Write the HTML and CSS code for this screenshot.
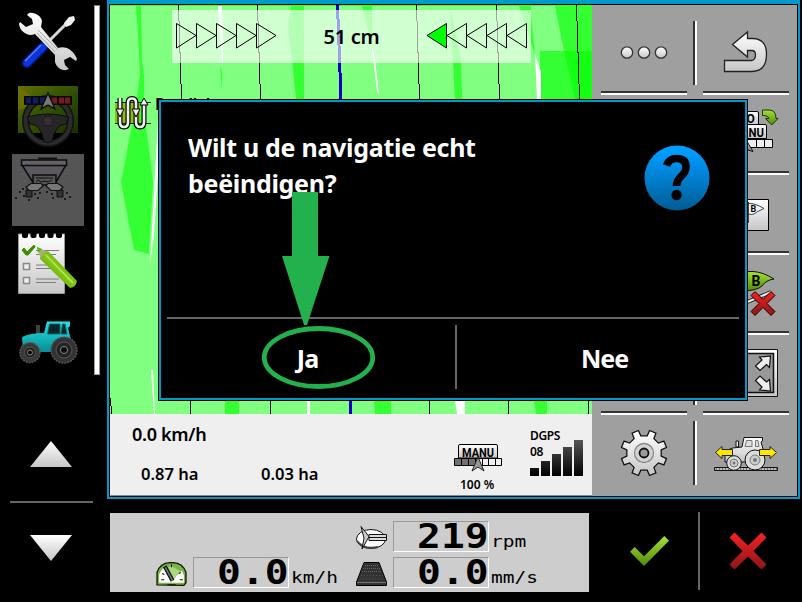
FILE: index.html
```html
<!DOCTYPE html>
<html lang="nl">
<head>
<meta charset="utf-8">
<title>Navigatie</title>
<link rel="stylesheet" href="styles.css">
</head>
<body>
<svg class="defs" width="0" height="0" aria-hidden="true">
  <defs>
    <linearGradient id="silver" x1="0" y1="0" x2="0" y2="1"><stop offset="0" stop-color="#fff"/><stop offset="1" stop-color="#c6c6c6"/></linearGradient>
    <linearGradient id="lime" x1="0" y1="0" x2="0" y2="1"><stop offset="0" stop-color="#a8e038"/><stop offset="1" stop-color="#4f8a08"/></linearGradient>
    <linearGradient id="red" x1="0" y1="0" x2="0" y2="1"><stop offset="0" stop-color="#f52222"/><stop offset="1" stop-color="#8c1518"/></linearGradient>
    <linearGradient id="blue" x1="0" y1="0" x2="0" y2="1"><stop offset="0.1" stop-color="#009cff"/><stop offset="1" stop-color="#005c94"/></linearGradient>
    <linearGradient id="teal" x1="0" y1="0" x2="0" y2="1"><stop offset="0" stop-color="#22e4e8"/><stop offset="1" stop-color="#068d94"/></linearGradient>
    <linearGradient id="dark" x1="0" y1="0" x2="0" y2="1"><stop offset="0" stop-color="#555"/><stop offset="1" stop-color="#000"/></linearGradient>
    <linearGradient id="olive" x1="0" y1="0" x2="1" y2="1"><stop offset="0" stop-color="#6b6f00"/><stop offset="0.35" stop-color="#3c5a04"/><stop offset="1" stop-color="#163000"/></linearGradient>
    <linearGradient id="pencil" x1="1" y1="0" x2="0" y2="1"><stop offset="0" stop-color="#4f8a0c"/><stop offset="0.5" stop-color="#86c81a"/><stop offset="1" stop-color="#2f6a00"/></linearGradient>
  </defs>
</svg>
<div class="terminal">
  <nav class="sidebar">
    <div class="apps">
      <div class="app">
        <svg viewBox="12 6 72 72">
          <path d="M27 63L43 47" stroke="#001a8c" stroke-width="10" stroke-linecap="round"/>
          <path d="M27 63L43 47" stroke="#0a35d8" stroke-width="7" stroke-linecap="round"/>
          <path d="M25 61L41 45" stroke="#5a80ff" stroke-width="1.500"/>
          <path d="M48 42L67 23" stroke="#d8d8d8" stroke-width="3"/>
          <path d="M64 23L69 17L74 16L75 20L71 25L66 27Z" fill="#eee"/>
          <path d="M29 13C35 12 41 16 42 21L41 27L58 48C65 45 74 50 77 59L76 61L70 57L64 60L65 65L69 69C64 72 57 69 55 62L55 55L35 34C28 37 20 32 19 24L20 22L26 27L33 24L32 19L27 15Z" fill="url(#silver)"/>
          <path d="M38 30L58 50M37 33L55 52" stroke="#aaa" fill="none"/>
        </svg>
      </div>
      <div class="app">
        <svg viewBox="12 80 72 72">
          <path d="M18 86H78V133H18Z" fill="url(#olive)"/>
          <path d="M18 86L40 103L18 110Z" fill="#747400" opacity=".7"/>
          <circle cx="48" cy="121" r="22.500" fill="none" stroke="#111" stroke-width="7"/>
          <circle cx="48" cy="121" r="22.500" fill="none" stroke="#2b2b2b" stroke-width="4"/>
          <path d="M27 117Q48 111 69 117L66 124Q55 124 52 142H44Q41 124 30 124Z" fill="#262626" stroke="#0c0c0c"/>
          <circle cx="48" cy="121" r="5" fill="#303030" stroke="#171717"/>
          <path d="M24 96H72V105H24Z" fill="#080808"/>
          <path d="M26 97.500h5v6h-5zM33 97.500h5v6h-5zM40 97.500h5v6h-5z" fill="#111b62"/>
          <path d="M52 97.500h5v6h-5zM59 97.500h5v6h-5zM65 97.500h5v6h-5z" fill="#781820"/>
          <path d="M48 93L55 109L48 105L41 109Z" fill="#777" stroke="#111" stroke-width="1.500"/>
        </svg>
      </div>
      <div class="app active">
        <svg viewBox="12 154 72 72">
          <path d="M38 158.500H57" stroke="#111" stroke-width="2"/>
          <path d="M22 165L34 184H55L66 165Z" fill="#5d5860" stroke="#0c0c0c" stroke-width="1.500"/>
          <path d="M21.500 160H66.500V165.500H21.500Z" fill="#636363" stroke="#0c0c0c" stroke-width="1.500"/>
          <path d="M33 175H56V185H33Z" fill="#555" stroke="#0c0c0c" stroke-width="1.500"/>
          <path d="M36 178H53M36 182l2-2 3 2 4-1 3 1 4-2" stroke="#111" fill="none"/>
          <path d="M26 190h6v7h-6zM57 190h6v7h-6z" fill="#333" stroke="#111"/>
          <path d="M26 187L31 183.500H41L43 186L38 190.500H29ZM63 187L58 183.500H48L46 186L51 190.500H60Z" fill="#777" stroke="#111" stroke-width="1.200"/>
          <path d="M19 191h2v2h-2zM23 195h2v2h-2zM15 197h2v2h-2zM34 193h2v2h-2zM39 192h2v2h-2zM46 191h2v2h-2zM51 193h2v2h-2zM37 197h2v2h-2zM52 197h2v2h-2zM66 192h2v2h-2zM69 196h2v2h-2zM64 198h2v2h-2zM22 188h2v2h-2zM28 199h2v2h-2z" fill="#1b1b1b"/>
        </svg>
      </div>
      <div class="app">
        <svg viewBox="12 228 72 72">
          <path d="M18.500 234H64.500V293.500H18.500Z" fill="url(#silver)" stroke="#999"/>
          <path d="M22 232h6v4a3 2 0 0 1-6 0zM30.500 232h6v4a3 2 0 0 1-6 0zM39 232h6v4a3 2 0 0 1-6 0zM47.500 232h6v4a3 2 0 0 1-6 0zM56 232h6v4a3 2 0 0 1-6 0z" fill="#000"/>
          <path d="M36 250.500H59M36 254.500H56M36 265H59M36 268.500H56M36 279H59M36 282.500H56" stroke="#7d7d7d"/>
          <path d="M23.500 263.500h6v6h-6zM23.500 277.500h6v6h-6z" fill="#eee" stroke="#888" stroke-width="1.500"/>
          <path d="M22 250L24 248L27 252L34 245L35 247L28 255H26Z" fill="#3c8c00" stroke="#3c8c00"/>
          <path d="M37 247L48 252L41 260Z" fill="#b7a77d"/>
          <path d="M37 247L42 249L38 253Z" fill="#46c018"/>
          <path d="M48 251L77 281Q76 287 70 288L40 259Q42 253 48 251Z" fill="url(#pencil)"/>
          <path d="M46 255L73 283" stroke="#b3ec4a" stroke-width="1.500"/>
        </svg>
      </div>
      <div class="app">
        <svg viewBox="12 302 72 72">
          <path d="M36 334V325H40V334Z" fill="#404040"/>
          <path d="M22 337Q30 333 44 333L47 321.500H70V326L68 328L71 340L60 352H23Z" fill="url(#teal)"/>
          <path d="M49.500 324H60V334H47.500ZM62.500 324H65L67 334H61Z" fill="#0a2426" stroke="#076b70"/>
          <circle cx="64" cy="350" r="13" fill="#333" stroke="#555" stroke-width="1.500" stroke-dasharray="2 1"/>
          <circle cx="64" cy="350" r="8" fill="#242424" stroke="#555"/>
          <circle cx="64" cy="350" r="3.500" fill="#070707" stroke="#888"/>
          <circle cx="30" cy="352.500" r="10" fill="#383838" stroke="#5a5a5a" stroke-width="1.500" stroke-dasharray="2 1"/>
          <circle cx="30" cy="352.500" r="5.500" fill="#222" stroke="#555"/>
          <circle cx="30" cy="352.500" r="2.500" fill="#000" stroke="#888"/>
        </svg>
      </div>
    </div>
    <div class="scrollbar"></div>
    <div class="pager">
      <svg class="up" viewBox="0 0 42 26"><path d="M21 0L42 26H0Z" fill="url(#silver)"/></svg>
      <div class="rule"></div>
      <svg class="down" viewBox="0 0 42 26"><path d="M0 0H42L21 26Z" fill="url(#silver)"/></svg>
    </div>
  </nav>

  <section class="window">
    <div class="screen">
      <div class="field">
        <div class="map">
          <svg class="terrain" viewBox="110 5 482 409">
            <g fill="#00ff00" fill-opacity=".6">
              <path d="M110 5H592V6H110Z"/>
              <path d="M136 6H141L142 60L144 75V110L153 182L149 254L134 250L121 182L135 110L140 75L138 33Z"/>
              <path d="M291 6H304V99H296L291 50L288 30Z"/>
              <path d="M362 6H372V45Z"/>
              <path d="M450 7L461 60L462 99H455Z"/>
              <path d="M519 6H531V16L535 55Z"/>
              <path d="M555 6H592V51H564Z"/>
              <path d="M540 51H592V99H540Z"/>
              <path d="M564 51H592V99H575Z"/>
              <path d="M225 401H239V414H225ZM374 401H391V414H375ZM534 401H547V414H536Z"/>
              <path d="M220 66L222 72V90L221 80Z"/>
            </g>
            <g fill="#fff">
              <path d="M218 6H222L223 63H222Z"/>
              <path d="M371 38L375 60L379 94L377 91L374 66Z"/>
              <path d="M535 54L541 72V99H537Z"/>
              <path d="M307 401H310V414H307ZM455 401H465V414H457Z"/>
              <path d="M158 120V175L154 235L150 265ZM151 370L153 370L155 414H154Z"/>
            </g>
            <g fill="none" stroke="#000" shape-rendering="crispEdges">
              <path d="M178.500 5L181.500 99L190.500 390V414M257.500 5L260.500 99L270.500 390V414M416.500 5L419.500 99L429.500 390V414M496.500 5L499.500 99L508.500 390V414M576.500 5L579.500 99L588.500 390V414M110.500 398L111.500 414"/>
              <path d="M337.500 5L341 99L350.500 390V414" stroke="#0000c8" stroke-width="3"/>
            </g>
          </svg>
          <div class="lightbar">
            <svg viewBox="0 0 101 26"><path d="M.5 .5L20 12.500L.5 25ZM20.500 .5L40 12.500L20.500 25ZM40.500 .5L60 12.500L40.500 25ZM60.500 .5L80 12.500L60.500 25ZM80.500 .5L100 12.500L80.500 25Z" fill="none" stroke="#000"/></svg>
            <span class="deviation">51 cm</span>
            <svg viewBox="0 0 101 26"><path d="M20.500 .5L1 12.500L20.500 25Z" fill="#0f0" stroke="#000"/><path d="M40.500 .5L21 12.500L40.500 25ZM60.500 .5L41 12.500L60.500 25ZM80.500 .5L61 12.500L80.500 25ZM100.500 .5L81 12.500L100.500 25Z" fill="none" stroke="#000"/></svg>
          </div>
          <div class="mode">
            <svg viewBox="115 96 36 34">
              <path d="M115 103H140V123H115Z" fill="#8bbf12"/>
              <path d="M115 102.500H151M115 123.500H151" stroke="#222"/>
              <path d="M120 98V122Q120 127 124 127T128 122V103Q128 98.500 132 98.500T136 103V122Q136 127 140 127T144 122V103" fill="none" stroke="#000" stroke-width="5"/>
              <path d="M120 98V122Q120 127 124 127T128 122V103Q128 98.500 132 98.500T136 103V122Q136 127 140 127T144 122V103" fill="none" stroke="#eee" stroke-width="2.600"/>
              <path d="M116 109H124L120 117ZM132 109H140L136 117ZM140 105H148L144 98Z" fill="#eee" stroke="#000"/>
            </svg>
            <span>Parallel</span>
          </div>
        </div>
        <div class="info">
          <div class="work">
            <span class="speed">0.0 km/h</span>
            <div class="areas"><span>0.87 ha</span><span>0.03 ha</span></div>
          </div>
          <div class="steering">
            <svg viewBox="454 444 48 28">
              <path d="M458.500 458V446Q458.500 444.500 460 444.500H496Q497.500 444.500 497.500 446V458Z" fill="url(#silver)" stroke="#000"/>
              <text class="badge" x="478" y="456.500" text-anchor="middle" textLength="32" lengthAdjust="spacingAndGlyphs">MANU</text>
              <path d="M454.500 458.500H501.500V465.500H454.500Z" fill="#eee" stroke="#000"/>
              <path d="M455 459H478V465H455Z" fill="#707070"/>
              <path d="M461.500 459V465M468.500 459V465M475.500 459V465M482.500 459V465M488.500 459V465M495.500 459V465" stroke="#000"/>
              <path d="M478 457L484 471L478 467L472 471Z" fill="#999" stroke="#222"/>
            </svg>
            <span>100 %</span>
          </div>
          <div class="gps">
            <div class="gpstext"><span>DGPS</span><span>08</span></div>
            <svg viewBox="530 440 53 36"><path d="M530 468h9v8h-9zM541 461h9v15h-9zM552 454h9v22h-9zM563 447h9v29h-9zM574 440h9v36h-9z" fill="url(#dark)"/></svg>
          </div>
        </div>
      </div>

      <aside class="softkeys">
        <div class="row">
          <div class="key"><svg viewBox="601 15 86 76"><g fill="url(#silver)" stroke="#333" stroke-width="1.300"><circle cx="627" cy="52.500" r="5.700"/><circle cx="644" cy="52.500" r="5.700"/><circle cx="661" cy="52.500" r="5.700"/></g></svg></div>
          <div class="split"></div>
          <div class="key"><svg viewBox="703 15 86 76"><path d="M724.500 60.500V71.500H752Q766.500 71.500 766.500 54Q766.500 38.500 752 38.500H747.500V32L732.500 44.500L747.500 57V50.500H752Q755.500 50.500 755.500 55T752 60.500Z" fill="url(#silver)" stroke="#222" stroke-width="1.300"/></svg></div>
        </div>
        <div class="row">
          <div class="key"></div>
          <div class="split"></div>
          <div class="key"><svg viewBox="703 95 86 76">
            <path d="M724 111.500H757Q758.500 111.500 758.500 113V125H724Z" fill="url(#silver)" stroke="#000"/>
            <text class="badge" x="746.500" y="122.500">O</text>
            <path d="M720 124.500H765Q766.500 124.500 766.500 126V138.500H720Z" fill="url(#silver)" stroke="#000"/>
            <text class="badge" x="748.500" y="136.500" textLength="15.500" lengthAdjust="spacingAndGlyphs">NU</text>
            <path d="M720 139.500H772.500V147.500H720ZM756.500 140V147M764.500 140V147" fill="#eee" stroke="#000"/>
            <path d="M745 138L753 151.500L748 150Z" fill="#999" stroke="#111"/>
            <path d="M762.500 110H769Q776 110 776 118.500H778L771.700 125L765.500 118.500H769Q768 115.500 762.500 115.500Z" fill="url(#lime)" stroke="#1d3500"/>
          </svg></div>
        </div>
        <div class="row">
          <div class="key"></div>
          <div class="split"></div>
          <div class="key"><svg viewBox="703 175 86 76">
            <path d="M720 199.500H768.500V230.500H720Z" fill="url(#silver)" stroke="#000"/>
            <path d="M748.500 202V223M748.500 203.500Q755 203 764 208.500Q756 212 754 214Q751 215 748.500 214Z" fill="#f5f5f5" stroke="#444"/>
            <text class="tiny" x="750.500" y="212">B</text>
          </svg></div>
        </div>
        <div class="row">
          <div class="key"></div>
          <div class="split"></div>
          <div class="key"><svg viewBox="703 255 86 76">
            <path d="M740 271.500H753Q763 272 774 279Q766 280 762 286Q757 291 740 291Z" fill="url(#lime)" stroke="#111"/>
            <text class="badge flag" x="751.500" y="286">B</text>
            <path d="M745 303L771 292" stroke="#222" stroke-width="4"/><path d="M745 303L771 292" stroke="#eee" stroke-width="2"/>
            <path d="M755 291.500L763 299.500L771 291.500L775 295.500L767 303.500L775 311.500L771 315.500L763 307.500L755 315.500L751 311.500L759 303.500L751 295.500Z" fill="url(#red)" stroke="#200"/>
          </svg></div>
        </div>
        <div class="row">
          <div class="key"></div>
          <div class="split"></div>
          <div class="key"><svg viewBox="703 335 86 76">
            <path d="M710 349.500H777.500V396.500H710Z" fill="url(#silver)" stroke="#111"/>
            <path d="M714 353.500H773.500V392.500H714Z" fill="#999" stroke="#111" stroke-width="1.500"/>
            <path d="M759.500 357L770.500 356L769.500 367.500L766.500 364.500L760 370.500L755.500 366L762 360ZM759.500 390L770.500 391L769.500 379.500L766.500 382L760 376L755.500 380.500L762 387Z" fill="#eee" stroke="#111" stroke-width="1.200"/>
          </svg></div>
        </div>
        <div class="row last">
          <div class="key"><svg viewBox="601 415 86 76">
            <g transform="translate(644 453)" stroke="#111" stroke-width="1.300">
              <path d="M17.200 3.200L22.500 5.600L19.900 11.900L14.400 9.900L9.900 14.400L11.900 19.900L5.600 22.500L3.200 17.200H-3.200L-5.600 22.500L-11.900 19.900L-9.900 14.400L-14.400 9.900L-19.900 11.900L-22.500 5.600L-17.200 3.200V-3.200L-22.500 -5.600L-19.900 -11.900L-14.400 -9.900L-9.900 -14.400L-11.900 -19.900L-5.600 -22.500L-3.200 -17.200H3.200L5.600 -22.500L11.900 -19.900L9.900 -14.400L14.400 -9.900L19.900 -11.900L22.500 -5.600L17.200 -3.200Z" fill="url(#silver)"/>
              <circle r="9.500" fill="#d4d4d4" stroke="#888"/>
              <circle r="4.500" fill="#999" stroke-width="1.800"/>
            </g>
          </svg></div>
          <div class="split"></div>
          <div class="key"><svg viewBox="703 415 86 76">
            <path d="M714.500 467.500H777.500V470.500H714.500Z" fill="#bbb" stroke="#111"/><path d="M716 469H777" stroke="#333" stroke-dasharray="1 2"/>
            <path d="M725 462V451Q732 447 742 447L744 437.500H762.500V441L761 442L763 449L766 455L757 462Z" fill="url(#silver)" stroke="#111"/>
            <path d="M736 447V441H738.500V447Z" fill="#eee" stroke="#111"/>
            <path d="M746.500 440.500H752V446.500H745ZM755.500 440.500H758L759 446.500H755.500Z" fill="#ddd" stroke="#777"/>
            <circle cx="755" cy="460" r="10" fill="#ddd" stroke="#111"/><circle cx="755" cy="460" r="5" fill="#ccc" stroke="#777"/><circle cx="755" cy="460" r="2" fill="#777"/>
            <circle cx="734" cy="463" r="7.300" fill="#ddd" stroke="#111"/><circle cx="734" cy="463" r="4" fill="#ccc" stroke="#777"/><circle cx="734" cy="463" r="1.500" fill="#777"/>
            <path d="M715.500 452.500L722 446.500V449.500H732.500V455.500H722V458.500ZM776.500 452.500L770 446.500V449.500H759.500V455.500H770V458.500Z" fill="#ffe600" stroke="#222"/>
          </svg></div>
        </div>
      </aside>
    </div>

    <div class="dialog" role="dialog">
      <div class="message">
        <p>Wilt u de navigatie echt<br>beëindigen?</p>
        <svg class="question" viewBox="0 0 66 66">
          <circle cx="33" cy="33" r="32.500" fill="url(#blue)"/>
          <path d="M22.500 20.500Q25 13.500 32.500 13.500Q42 13.500 42 22Q42 27 37 31.500Q32.500 35.500 32.500 41" fill="none" stroke="#000" stroke-width="7.600"/>
          <circle cx="32.500" cy="50" r="5.200"/>
        </svg>
      </div>
      <div class="choices">
        <div class="choice yes">Ja</div>
        <div class="bar"></div>
        <div class="choice no">Nee</div>
      </div>
      <svg class="pointer" viewBox="262 192 114 198">
        <path d="M292 192H318V256H329.500L307 325H304L282 256H292Z" fill="#22b14c"/>
        <ellipse cx="318.500" cy="357.500" rx="54.200" ry="29" fill="none" stroke="#22b14c" stroke-width="4.800"/>
      </svg>
    </div>
  </section>

  <footer class="footer">
    <div class="gauges">
      <div class="reading speedometer">
        <svg viewBox="156 563 30 23">
          <path d="M157 585V573Q160 563.500 171 563.500T185 573V583L183 585.500Z" fill="#79b648" stroke="#101800" stroke-width="1.300"/>
          <path d="M159 583V575Q162 568 167 567L171 580L181 571L183 576V583Z" fill="#fff"/>
          <path d="M165 569L171 567L180 572L172 581Z" fill="#a9d77e"/>
          <path d="M161 580h3M179 580h3M162 574l2 1M178 574l2-1M171 565v3M167 585h8" stroke="#111"/>
          <path d="M164.500 567L172 581" stroke="#111" stroke-width="4"/><path d="M165 568L172 581" stroke="#777" stroke-width="1.500"/>
        </svg>
        <div class="value"><span>0.0</span></div><span class="unit">km/h</span>
      </div>
      <div class="stack">
        <div class="reading">
          <svg viewBox="356 525 31 24">
            <ellipse cx="371" cy="538" rx="14.500" ry="9.500" fill="#fff" stroke="#111"/>
            <path d="M357 540Q364 549 378 546" fill="none" stroke="#444" stroke-width="2"/>
            <path d="M361 525.500L369 535.500L362 548L364 537Z" fill="#ccc" stroke="#111"/>
            <path d="M369 533.500H386.500V539.500H369Z" fill="#ddd" stroke="#111"/><path d="M369 536.500H386" stroke="#111"/>
          </svg>
          <div class="value"><span>219</span></div><span class="unit">rpm</span>
        </div>
        <div class="reading">
          <svg viewBox="356 563 31 24">
            <path d="M364 563.500H379L386.500 583V586.500H356.500V583Z" fill="#333" stroke="#000"/>
            <path d="M365 566.500H379M363 569.500H380M362 572.500H381" stroke="#666" stroke-dasharray="1 1"/><path d="M361 576.500H383M360 580H384" stroke="#555" stroke-dasharray="1 2"/>
            <path d="M357 583.500H386" stroke="#777"/>
          </svg>
          <div class="value"><span>0.0</span></div><span class="unit">mm/s</span>
        </div>
      </div>
    </div>
    <div class="action ok"><svg viewBox="0 0 39 30"><path d="M0 15.700L4.700 11L14 20.300L34.300 0L39 4.700L14 30Z" fill="url(#lime)"/></svg></div>
    <div class="action cancel"><svg viewBox="0 0 38 38"><path d="M5.500 .5L19 13.500L32.500 .5L37.500 5.500L24.500 19L37.500 32.500L32.500 37.500L19 24.500L5.500 37.500L.5 32.500L13.500 19L.5 5.500Z" fill="url(#red)"/></svg></div>
  </footer>
</div>
</body>
</html>
```
FILE: styles.css
```css
* { box-sizing: border-box; }
html, body { margin: 0; background: #000; overflow: hidden; }
svg { display: block; }
.defs { position: absolute; }

.terminal {
  display: grid;
  grid-template-columns: 107px 693px;
  grid-template-rows: 499px 103px;
  width: 802px;
  height: 602px;
  background: #000;
  color: #000;
  font-family: "Noto Sans", "Open Sans", sans-serif;
  font-weight: 600;
}

/* Left application list */
.sidebar {
  grid-row: 1 / 3;
  display: grid;
  grid-template-columns: 72px 6px;
  grid-template-rows: 375px 1fr;
  column-gap: 10px;
  padding-left: 12px;
}
.apps { display: flex; flex-direction: column; gap: 2px; padding-top: 6px; }
.app { width: 72px; height: 72px; }
.app svg { width: 72px; height: 72px; fill: none; }
.app.active { background: #555; }
.scrollbar { margin-top: 5px; background: #fff; border: 1px solid #999; border-top-color: #777; }
.pager { grid-column: 1 / 3; display: flex; flex-direction: column; padding-top: 66px; }
.pager svg { width: 42px; height: 26px; margin-left: 18px; }
.rule { width: 83px; height: 2px; margin: 34px 0 32px -2px; background: #666; }

/* Main window */
.window { position: relative; background: #0099cc; padding: 4px 2px 2px; }
.screen { display: flex; height: 493px; border: 1px solid #000; background: #9f9f9f; }
.field { width: 482px; display: flex; flex-direction: column; }
.map { position: relative; height: 409px; background: #80ff80; overflow: hidden; }
.terrain { width: 482px; height: 409px; }
.lightbar {
  position: absolute; left: 62px; top: 5px; width: 359px; height: 53px;
  display: flex; align-items: center; justify-content: space-between;
  padding: 0 4px 1px; background: rgba(255, 255, 255, .63);
}
.lightbar svg { width: 101px; height: 26px; }
.deviation { padding-top: 1px; font-size: 20px; line-height: 26px; letter-spacing: -.3px; }
.mode { position: absolute; left: 5px; top: 91px; display: flex; gap: 4px; font-size: 16px; line-height: 16px; letter-spacing: -.4px; }
.mode svg { width: 36px; height: 34px; }

.info { display: flex; height: 82px; background: #efefef; border-bottom: 1px solid #888; }
.work { width: 344px; padding: 7px 0 0 22px; }
.speed { display: block; font-size: 18px; line-height: 26px; letter-spacing: -.3px; }
.areas { display: flex; padding: 15px 0 0 9px; font-size: 16.5px; line-height: 24px; }
.areas span { width: 120px; }
.steering { width: 54px; margin-right: -6px; padding-top: 30px; font-size: 12px; line-height: 14px; }
.steering span { margin-left: 6px; }
.steering svg { width: 48px; height: 28px; margin-bottom: 6px; }
.badge { font: 700 12px Roboto, sans-serif; fill: #000; }
.flag { font-size: 14px; }
.tiny { font: 700 9px Roboto, sans-serif; fill: #000; }
.gps { display: grid; padding: 14px 0 0 28px; font-size: 12px; line-height: 16px; letter-spacing: -.4px; align-items: start; }
.gps > * { grid-area: 1 / 1; }
.gps svg { width: 53px; height: 36px; margin-top: 12px; }
.gpstext { display: flex; flex-direction: column; }

.softkeys { width: 205px; padding: 10px 0 0 9px; }
.row { display: flex; height: 80px; }
.key { width: 86px; height: 80px; border-bottom: 2px solid #fff; box-shadow: inset 0 -2px #333; }
.key svg { width: 86px; height: 76px; }
.split { width: 4px; height: 64px; margin: 6px 6px 0; background: linear-gradient(90deg, #333 50%, #fff 50%); }
.last .key { border: 0; box-shadow: none; }

/* Confirmation dialog */
.dialog {
  position: absolute; left: 52px; top: 100px; width: 588px; height: 300px;
  padding: 0 6px; background: #000; color: #fff; font-weight: 700;
  border: 2px solid #0099cc; outline: 1px solid #000;
}
.message { display: flex; height: 217px; padding: 27px 29px 0 21px; border-bottom: 2px solid #666; justify-content: space-between; }
.message p { margin: 0; font-size: 25px; line-height: 36px; letter-spacing: -.3px; white-space: nowrap; }
.question { width: 66px; height: 66px; margin-top: 16px; }
.choices { display: flex; align-items: center; height: 76px; }
.bar { width: 2px; height: 64px; background: #666; }
.choice { text-align: center; font-size: 25px; line-height: 36px; padding-top: 1px; letter-spacing: -1px; }
.yes { width: 288px; padding-right: 7px; }
.no { flex: 1; padding-left: 13px; }
.pointer { position: absolute; left: 101px; top: 90px; width: 114px; height: 198px; }

/* Bottom strip */
.footer { display: flex; padding: 13px 0 0 3px; align-items: flex-start; }
.gauges { display: flex; width: 479px; height: 79px; margin-top: 1px; padding: 8px 0 0 46px; background: #cdcdcd; }
.reading { display: flex; align-items: flex-start; height: 31px; }
.reading svg { width: 31px; height: 24px; margin: 5px 6px 0 0; }
.speedometer { width: 200px; margin-top: 36px; }
.stack { display: flex; flex-direction: column; gap: 5px; }
.value {
  width: 96px; height: 31px; border: 1px solid #999; border-right-color: #fff; border-bottom-color: #fff;
  display: flex; justify-content: flex-end;
  font: 700 33px/30px "DejaVu Sans Mono", monospace;
}
.value span { transform: scaleX(1.2); transform-origin: right; margin-right: -1px; }
.unit { margin: 11px 0 0 2px; font: 400 16px/20px "DejaVu Sans Mono", monospace; transform: scaleX(1.22); transform-origin: left; }
.action { height: 78px; display: flex; align-items: center; }
.ok { width: 111px; padding-left: 41px; border-right: 2px solid #666; }
.ok svg { width: 39px; height: 30px; }
.cancel { padding-left: 29px; }
.cancel svg { width: 38px; height: 38px; }
```
